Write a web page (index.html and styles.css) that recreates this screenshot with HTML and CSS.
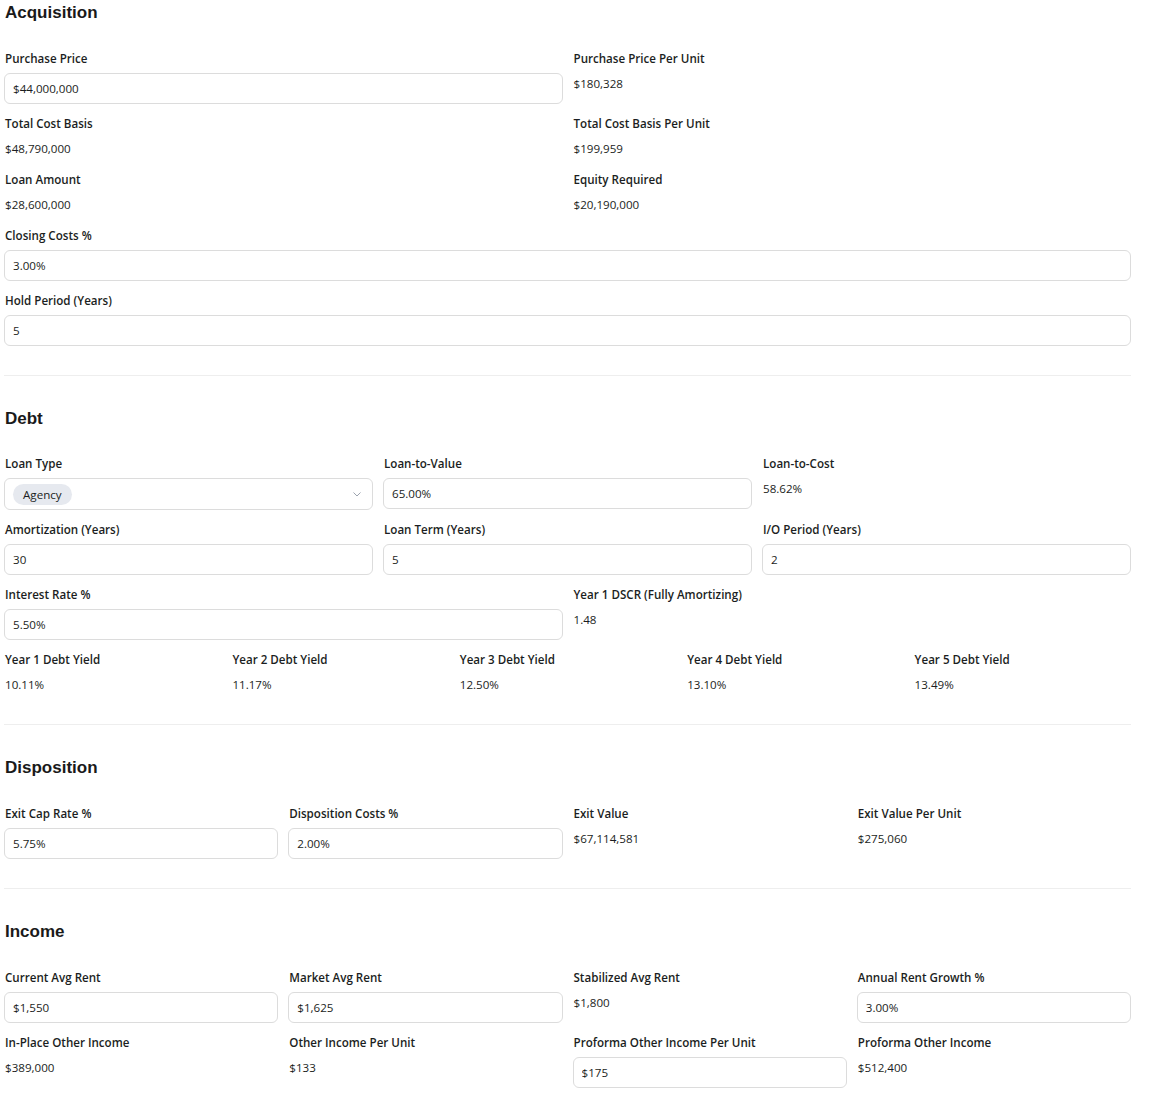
FILE: index.html
```html
<!DOCTYPE html>
<html lang="en">
  <head>
    <meta charset="UTF-8" />
    <meta name="viewport" content="width=device-width, initial-scale=1.0" />
    <link rel="stylesheet" href="styles.css">
    <title>Deal Assumptions</title>
  </head>
  <body>
    <div id="page">
      <!-- acquisition -->
      <section class="section">
        <h2>Acquisition</h2>
        <div class="grid cols-2">
          <div class="field">
            <label>Purchase Price</label>
            <input class="input" type="text" value="$44,000,000" />
          </div>
          <div class="field">
            <label>Purchase Price Per Unit</label>
            <span class="value">$180,328</span>
          </div>
          <div class="field">
            <label>Total Cost Basis</label>
            <span class="value">$48,790,000</span>
          </div>
          <div class="field">
            <label>Total Cost Basis Per Unit</label>
            <span class="value">$199,959</span>
          </div>
          <div class="field">
            <label>Loan Amount</label>
            <span class="value">$28,600,000</span>
          </div>
          <div class="field">
            <label>Equity Required</label>
            <span class="value">$20,190,000</span>
          </div>
        </div>
        <div class="grid">
          <div class="field">
            <label>Closing Costs %</label>
            <input class="input" type="text" value="3.00%" />
          </div>
          <div class="field">
            <label>Hold Period (Years)</label>
            <input class="input" type="text" value="5" />
          </div>
        </div>
      </section>

      <!-- debt -->
      <section class="section debt">
        <h2>Debt</h2>
        <div class="grid cols-3">
          <div class="field">
            <label>Loan Type</label>
            <div class="select">
              <span class="chip">Agency</span>
              <svg class="chevron" width="10" height="10" viewBox="0 0 10 10">
                <path d="M1.5 3.5 L5 7 L8.5 3.5" fill="none" stroke="#9ca3af" stroke-width="1" />
              </svg>
            </div>
          </div>
          <div class="field">
            <label>Loan-to-Value</label>
            <input class="input" type="text" value="65.00%" />
          </div>
          <div class="field">
            <label>Loan-to-Cost</label>
            <span class="value">58.62%</span>
          </div>
          <div class="field">
            <label>Amortization (Years)</label>
            <input class="input" type="text" value="30" />
          </div>
          <div class="field">
            <label>Loan Term (Years)</label>
            <input class="input" type="text" value="5" />
          </div>
          <div class="field">
            <label>I/O Period (Years)</label>
            <input class="input" type="text" value="2" />
          </div>
        </div>
        <div class="grid cols-2">
          <div class="field">
            <label>Interest Rate %</label>
            <input class="input" type="text" value="5.50%" />
          </div>
          <div class="field">
            <label>Year 1 DSCR (Fully Amortizing)</label>
            <span class="value">1.48</span>
          </div>
        </div>
        <div class="grid cols-5">
          <div class="field">
            <label>Year 1 Debt Yield</label>
            <span class="value">10.11%</span>
          </div>
          <div class="field">
            <label>Year 2 Debt Yield</label>
            <span class="value">11.17%</span>
          </div>
          <div class="field">
            <label>Year 3 Debt Yield</label>
            <span class="value">12.50%</span>
          </div>
          <div class="field">
            <label>Year 4 Debt Yield</label>
            <span class="value">13.10%</span>
          </div>
          <div class="field">
            <label>Year 5 Debt Yield</label>
            <span class="value">13.49%</span>
          </div>
        </div>
      </section>

      <!-- disposition -->
      <section class="section">
        <h2>Disposition</h2>
        <div class="grid cols-4">
          <div class="field">
            <label>Exit Cap Rate %</label>
            <input class="input" type="text" value="5.75%" />
          </div>
          <div class="field">
            <label>Disposition Costs %</label>
            <input class="input" type="text" value="2.00%" />
          </div>
          <div class="field">
            <label>Exit Value</label>
            <span class="value">$67,114,581</span>
          </div>
          <div class="field">
            <label>Exit Value Per Unit</label>
            <span class="value">$275,060</span>
          </div>
        </div>
      </section>

      <!-- income -->
      <section class="section last">
        <h2>Income</h2>
        <div class="grid cols-4">
          <div class="field">
            <label>Current Avg Rent</label>
            <input class="input" type="text" value="$1,550" />
          </div>
          <div class="field">
            <label>Market Avg Rent</label>
            <input class="input" type="text" value="$1,625" />
          </div>
          <div class="field">
            <label>Stabilized Avg Rent</label>
            <span class="value">$1,800</span>
          </div>
          <div class="field">
            <label>Annual Rent Growth %</label>
            <input class="input" type="text" value="3.00%" />
          </div>
          <div class="field">
            <label>In-Place Other Income</label>
            <span class="value">$389,000</span>
          </div>
          <div class="field">
            <label>Other Income Per Unit</label>
            <span class="value">$133</span>
          </div>
          <div class="field">
            <label>Proforma Other Income Per Unit</label>
            <input class="input" type="text" value="$175" />
          </div>
          <div class="field">
            <label>Proforma Other Income</label>
            <span class="value">$512,400</span>
          </div>
        </div>
      </section>
    </div>
  </body>
</html>
```

FILE: styles.css
```css
:root {
  --text: #1b1e22;
  --border: #dcdcdc;
  --divider: #eeeeee;
  --chip: #e6e9ef;
}

body {
  margin: 0;
  background: #fff;
  color: var(--text);
  font-family: "Open Sans", "Noto Sans", sans-serif;
}

#page {
  width: 1127px;
  padding: 1px 0 0 4px;
}

/* sections */
.section {
  padding-bottom: 29px;
  margin-bottom: 31px;
  border-bottom: 1px solid var(--divider);
}

.section.last {
  border-bottom: none;
  margin-bottom: 0;
}

.section h2 {
  margin: 0 0 24px 1px;
  font-family: "Liberation Sans", Arial, sans-serif;
  font-size: 17px;
  line-height: 24px;
  font-weight: bold;
  color: #1a1a1a;
}

.section.debt {
  padding-bottom: 28px;
}

.section.debt h2 {
  margin-bottom: 23px;
}

/* grids */
.grid {
  display: grid;
  grid-template-columns: 1fr;
  gap: 10px;
  align-items: start;
}

.grid + .grid {
  margin-top: 10px;
}

.cols-2 {
  grid-template-columns: repeat(2, 1fr);
}

.cols-3 {
  grid-template-columns: repeat(3, 1fr);
}

.cols-4 {
  grid-template-columns: repeat(4, 1fr);
}

.cols-5 {
  grid-template-columns: repeat(5, 1fr);
}

/* fields */
.field {
  display: flex;
  flex-direction: column;
  gap: 4px;
  min-width: 0;
}

.field label {
  padding-left: 1px;
  font-size: 11.6px;
  line-height: 20px;
  font-weight: 600;
  color: var(--text);
}

.field .value {
  padding-left: 1px;
  font-size: 11.6px;
  line-height: 22px;
  color: var(--text);
}

.input {
  box-sizing: border-box;
  width: 100%;
  height: 31px;
  margin: 0;
  padding: 0 8px;
  border: 1px solid var(--border);
  border-radius: 6px;
  background: #fff;
  font-family: inherit;
  font-size: 11.6px;
  color: var(--text);
  outline: none;
}

/* select */
.select {
  box-sizing: border-box;
  height: 32px;
  padding: 0 10px 0 8px;
  border: 1px solid var(--border);
  border-radius: 6px;
  display: flex;
  align-items: center;
  justify-content: space-between;
}

.chip {
  padding: 0 10px;
  line-height: 21px;
  border-radius: 11px;
  background: var(--chip);
  font-size: 11.6px;
}

.chevron {
  display: block;
}
```
